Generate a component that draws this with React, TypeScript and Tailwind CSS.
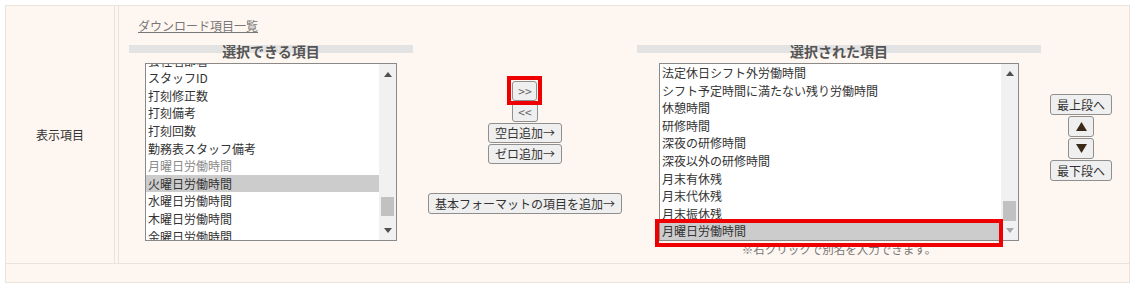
import React from 'react';

const leftItems = [
  '会社名部署',
  'スタッフID',
  '打刻修正数',
  '打刻備考',
  '打刻回数',
  '勤務表スタッフ備考',
  '月曜日労働時間',
  '火曜日労働時間',
  '水曜日労働時間',
  '木曜日労働時間',
  '金曜日労働時間',
];

const rightItems = [
  '法定休日シフト外労働時間',
  'シフト予定時間に満たない残り労働時間',
  '休憩時間',
  '研修時間',
  '深夜の研修時間',
  '深夜以外の研修時間',
  '月末有休残',
  '月末代休残',
  '月末振休残',
  '月曜日労働時間',
];

const btn =
  'h-[20px] px-[6px] border border-[#8f8f8f] rounded-[3px] bg-[#efefef] text-[12px] leading-none text-[#333] flex items-center justify-center whitespace-nowrap';

function Arrow({ up, color }: { up?: boolean; color: string }) {
  return (
    <svg width="8" height="5" viewBox="0 0 8 5">
      <polygon points={up ? '0,5 8,5 4,0' : '0,0 8,0 4,5'} fill={color} />
    </svg>
  );
}

interface ListBoxProps {
  items: string[];
  width: string;
  offset: string;
  selected: number;
  disabled?: number;
  thumb: string;
  downColor: string;
}

function ListBox({ items, width, offset, selected, disabled, thumb, downColor }: ListBoxProps) {
  return (
    <div className={`${width} h-[178px] mx-auto border border-[#8a8a8a] bg-white flex overflow-hidden`}>
      <div className="flex-1 overflow-hidden">
        <div className={offset}>
          {items.map((item, i) => (
            <div
              key={i}
              className={`h-[17.6px] leading-[17.6px] pl-[2px] text-[12px] whitespace-nowrap ${
                i === selected ? 'bg-[#cccccc]' : ''
              } ${i === disabled ? 'text-[#8a8a8a]' : 'text-[#333]'}`}
            >
              {item}
            </div>
          ))}
        </div>
      </div>
      <div className="w-[17px] bg-[#f1f1f1] flex flex-col">
        <div className="h-[20px] flex items-center justify-center">
          <Arrow up color="#505050" />
        </div>
        <div className="flex-1">
          <div className={`mx-[2px] bg-[#c1c1c1] ${thumb}`} />
        </div>
        <div className="h-[20px] flex items-center justify-center">
          <Arrow color={downColor} />
        </div>
      </div>
    </div>
  );
}

const headerBg =
  'h-[18px] leading-[18px] text-center text-[14px] font-bold text-[#555] bg-[linear-gradient(to_bottom,transparent_3px,#e3e3e3_3px,#e3e3e3_11px,transparent_11px)]';

export default function App() {
  return (
    <div className="w-[1136px] h-[290px] bg-white pt-[5px] pl-[5px] font-['Noto_Sans_CJK_JP',sans-serif] text-[#333]">
      <div className="w-[1125px] border border-[#ebe2da] bg-[#fef6f0]">
        {/* 表示項目 row */}
        <div className="flex h-[258px] border-b border-[#ebe2da]">
          <div className="w-[109px] border-r border-[#ebe2da] flex items-center justify-center text-[12px] text-[#333]">
            表示項目
          </div>
          <div className="w-[3px]" />
          <div className="flex-1 border-l border-[#ebe2da] pt-[11px] pl-[10px]">
            <div className="ml-[9px] h-[17px] leading-[17px] text-[12px] text-[#777] underline">
              ダウンロード項目一覧
            </div>
            <div className="flex items-start mt-[8px]">
              {/* selectable */}
              <div className="w-[284px]">
                <div className={headerBg}>選択できる項目</div>
                <div className="mt-[3px]">
                  <ListBox
                    items={leftItems}
                    width="w-[252px]"
                    offset="-mt-[12.4px]"
                    selected={7}
                    disabled={6}
                    thumb="mt-[113px] h-[19px]"
                    downColor="#505050"
                  />
                </div>
              </div>

              {/* middle buttons */}
              <div className="w-[224px] pt-[39px] flex flex-col items-center">
                <div className="flex flex-col items-center gap-[1px]">
                  <div className="relative">
                    <button className={`${btn} w-[25px] px-0 text-[11px] text-[#666]`}>&gt;&gt;</button>
                    <div className="absolute -left-[5px] -right-[5px] -top-[5px] -bottom-[4px] border-[4px] border-[#ee0000]" />
                  </div>
                  <button className={`${btn} w-[26px] px-0 text-[11px] text-[#666]`}>&lt;&lt;</button>
                  <button className={btn}>空白追加→</button>
                  <button className={btn}>ゼロ追加→</button>
                </div>
                <button className={`${btn} h-[21px] mt-[29px]`}>基本フォーマットの項目を追加→</button>
              </div>

              {/* selected */}
              <div className="w-[404px] relative">
                <div className={headerBg}>選択された項目</div>
                <div className="mt-[3px]">
                  <ListBox
                    items={rightItems}
                    width="w-[360px]"
                    offset="mt-0"
                    selected={9}
                    thumb="mt-[118px] h-[20px]"
                    downColor="#a8a8a8"
                  />
                </div>
                <div className="h-[16px] leading-[16px] text-center text-[11.5px] text-[#777]">
                  ※右クリックで別名を入力できます。
                </div>
                <div className="absolute left-[18px] top-[177px] w-[348px] h-[28px] border-[4px] border-[#ee0000]" />
              </div>

              {/* order buttons */}
              <div className="w-[80px] pt-[52px] flex flex-col items-center gap-[1px]">
                <button className={`${btn} h-[21px]`}>最上段へ</button>
                <button className={`${btn} h-[21px] w-[26px] px-0`}>
                  <svg width="11" height="9" viewBox="0 0 11 9">
                    <polygon points="0,9 11,9 5.5,0" fill="#3b2a18" />
                  </svg>
                </button>
                <button className={`${btn} h-[21px] w-[26px] px-0`}>
                  <svg width="11" height="9" viewBox="0 0 11 9">
                    <polygon points="0,0 11,0 5.5,9" fill="#3b2a18" />
                  </svg>
                </button>
                <button className={`${btn} h-[21px]`}>最下段へ</button>
              </div>
            </div>
          </div>
        </div>
        {/* empty row */}
        <div className="h-[18px]" />
      </div>
    </div>
  );
}
